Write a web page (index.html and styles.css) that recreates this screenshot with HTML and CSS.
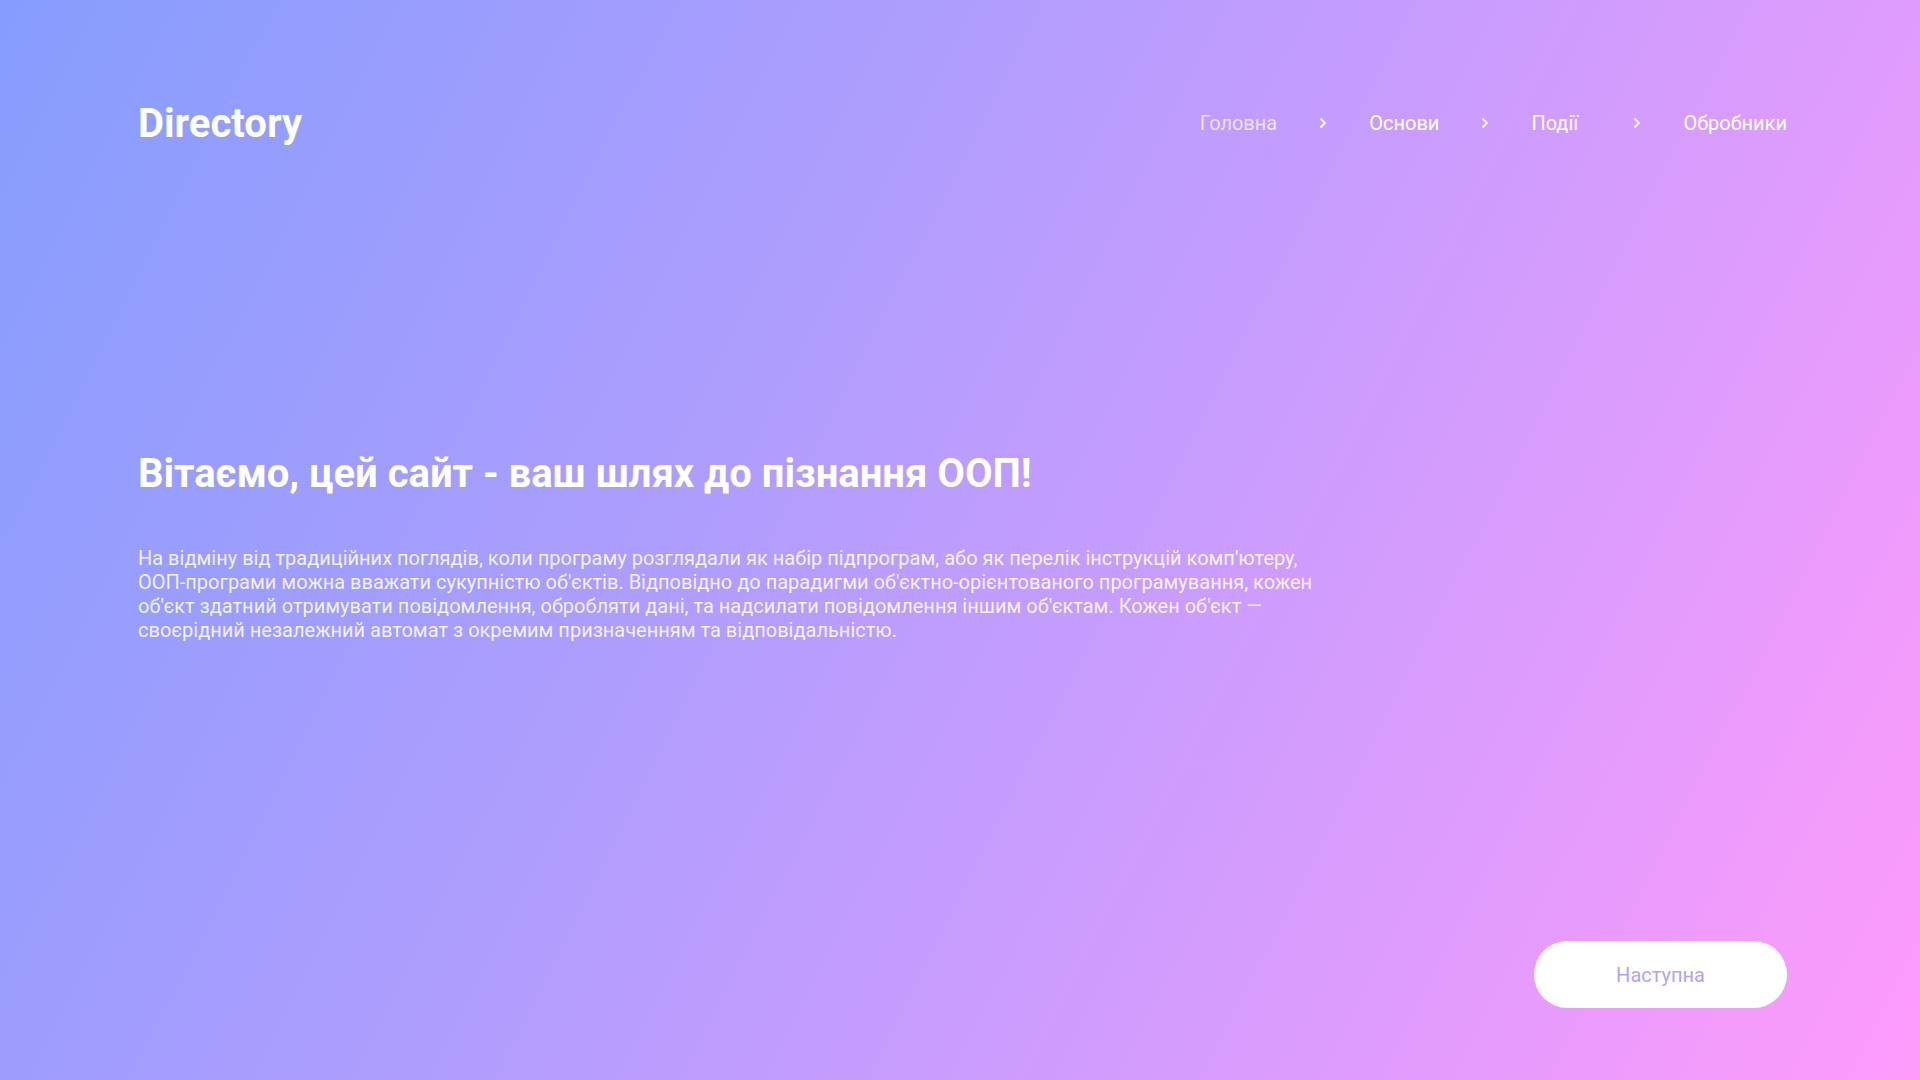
FILE: index.html
```html
<!DOCTYPE html>
<html lang="uk">
<head>
<meta charset="utf-8">
<title>Directory</title>
<link rel="stylesheet" href="styles.css">
</head>
<body>
<div class="page">
  <header class="header">
    <div class="logo">Directory</div>
    <nav class="nav">
      <a class="nav-link nav-link--muted" href="#">Головна</a>
      <svg class="chev" viewBox="0 0 8 12" width="8" height="12"><path d="M1.5 1.5 L6 6 L1.5 10.5" fill="none" stroke="#fff" stroke-width="1.8"/></svg>
      <a class="nav-link" href="#">Основи</a>
      <svg class="chev" viewBox="0 0 8 12" width="8" height="12"><path d="M1.5 1.5 L6 6 L1.5 10.5" fill="none" stroke="#fff" stroke-width="1.8"/></svg>
      <a class="nav-link" href="#">Події</a>
      <svg class="chev" viewBox="0 0 8 12" width="8" height="12"><path d="M1.5 1.5 L6 6 L1.5 10.5" fill="none" stroke="#fff" stroke-width="1.8"/></svg>
      <a class="nav-link" href="#">Обробники</a>
    </nav>
  </header>
  <main class="main">
    <h1 class="title">Вітаємо, цей сайт - ваш шлях до пізнання ООП!</h1>
    <p class="text">На відміну від традиційних поглядів, коли програму розглядали як набір підпрограм, або як перелік інструкцій комп'ютеру, ООП-програми можна вважати сукупністю об'єктів. Відповідно до парадигми об'єктно-орієнтованого програмування, кожен об'єкт здатний отримувати повідомлення, обробляти дані, та надсилати повідомлення іншим об'єктам. Кожен об'єкт — своєрідний незалежний автомат з окремим призначенням та відповідальністю.</p>
  </main>
  <footer class="footer">
    <a class="next-btn" href="#">Наступна</a>
  </footer>
</div>
</body>
</html>
```
FILE: styles.css
```css
* { box-sizing: border-box; }
html, body { margin: 0; padding: 0; height: 100%; }
body {
  font-family: Roboto, "Liberation Sans", sans-serif;
  color: #fff;
  background: linear-gradient(117deg, #869dfe 0%, #b09dfd 40%, #dc9cfd 75%, #ff9bfb 100%);
  min-height: 100vh;
}
.page {
  height: 100vh;
  display: flex;
  flex-direction: column;
  padding: 100px 133px 72px 138px;
}
.header {
  display: flex;
  align-items: center;
  justify-content: space-between;
  height: 48px;
}
.logo {
  font-size: 40px;
  font-weight: 700;
  line-height: 48px;
}
.nav {
  display: flex;
  align-items: center;
  gap: 42px;
  margin-top: -2px;
}
.nav-link {
  color: #fff;
  text-decoration: none;
  font-size: 20px;
  line-height: 24px;
  min-width: 60px;
}
.nav-link--muted { color: rgba(255,255,255,0.72); }
.chev { display: block; }
.main {
  flex: 1;
  padding-top: 302px;
}
.title {
  margin: 0 0 48px;
  font-size: 40px;
  line-height: 48px;
  font-weight: 700;
}
.text {
  margin: 0;
  max-width: 1200px;
  font-size: 20px;
  line-height: 24px;
  color: rgba(255,255,255,0.88);
}
.footer {
  display: flex;
  justify-content: flex-end;
}
.next-btn {
  display: flex;
  align-items: center;
  justify-content: center;
  width: 253px;
  height: 67px;
  border-radius: 34px;
  background: #fff;
  color: #b3a1fb;
  font-size: 20px;
  text-decoration: none;
}
```
